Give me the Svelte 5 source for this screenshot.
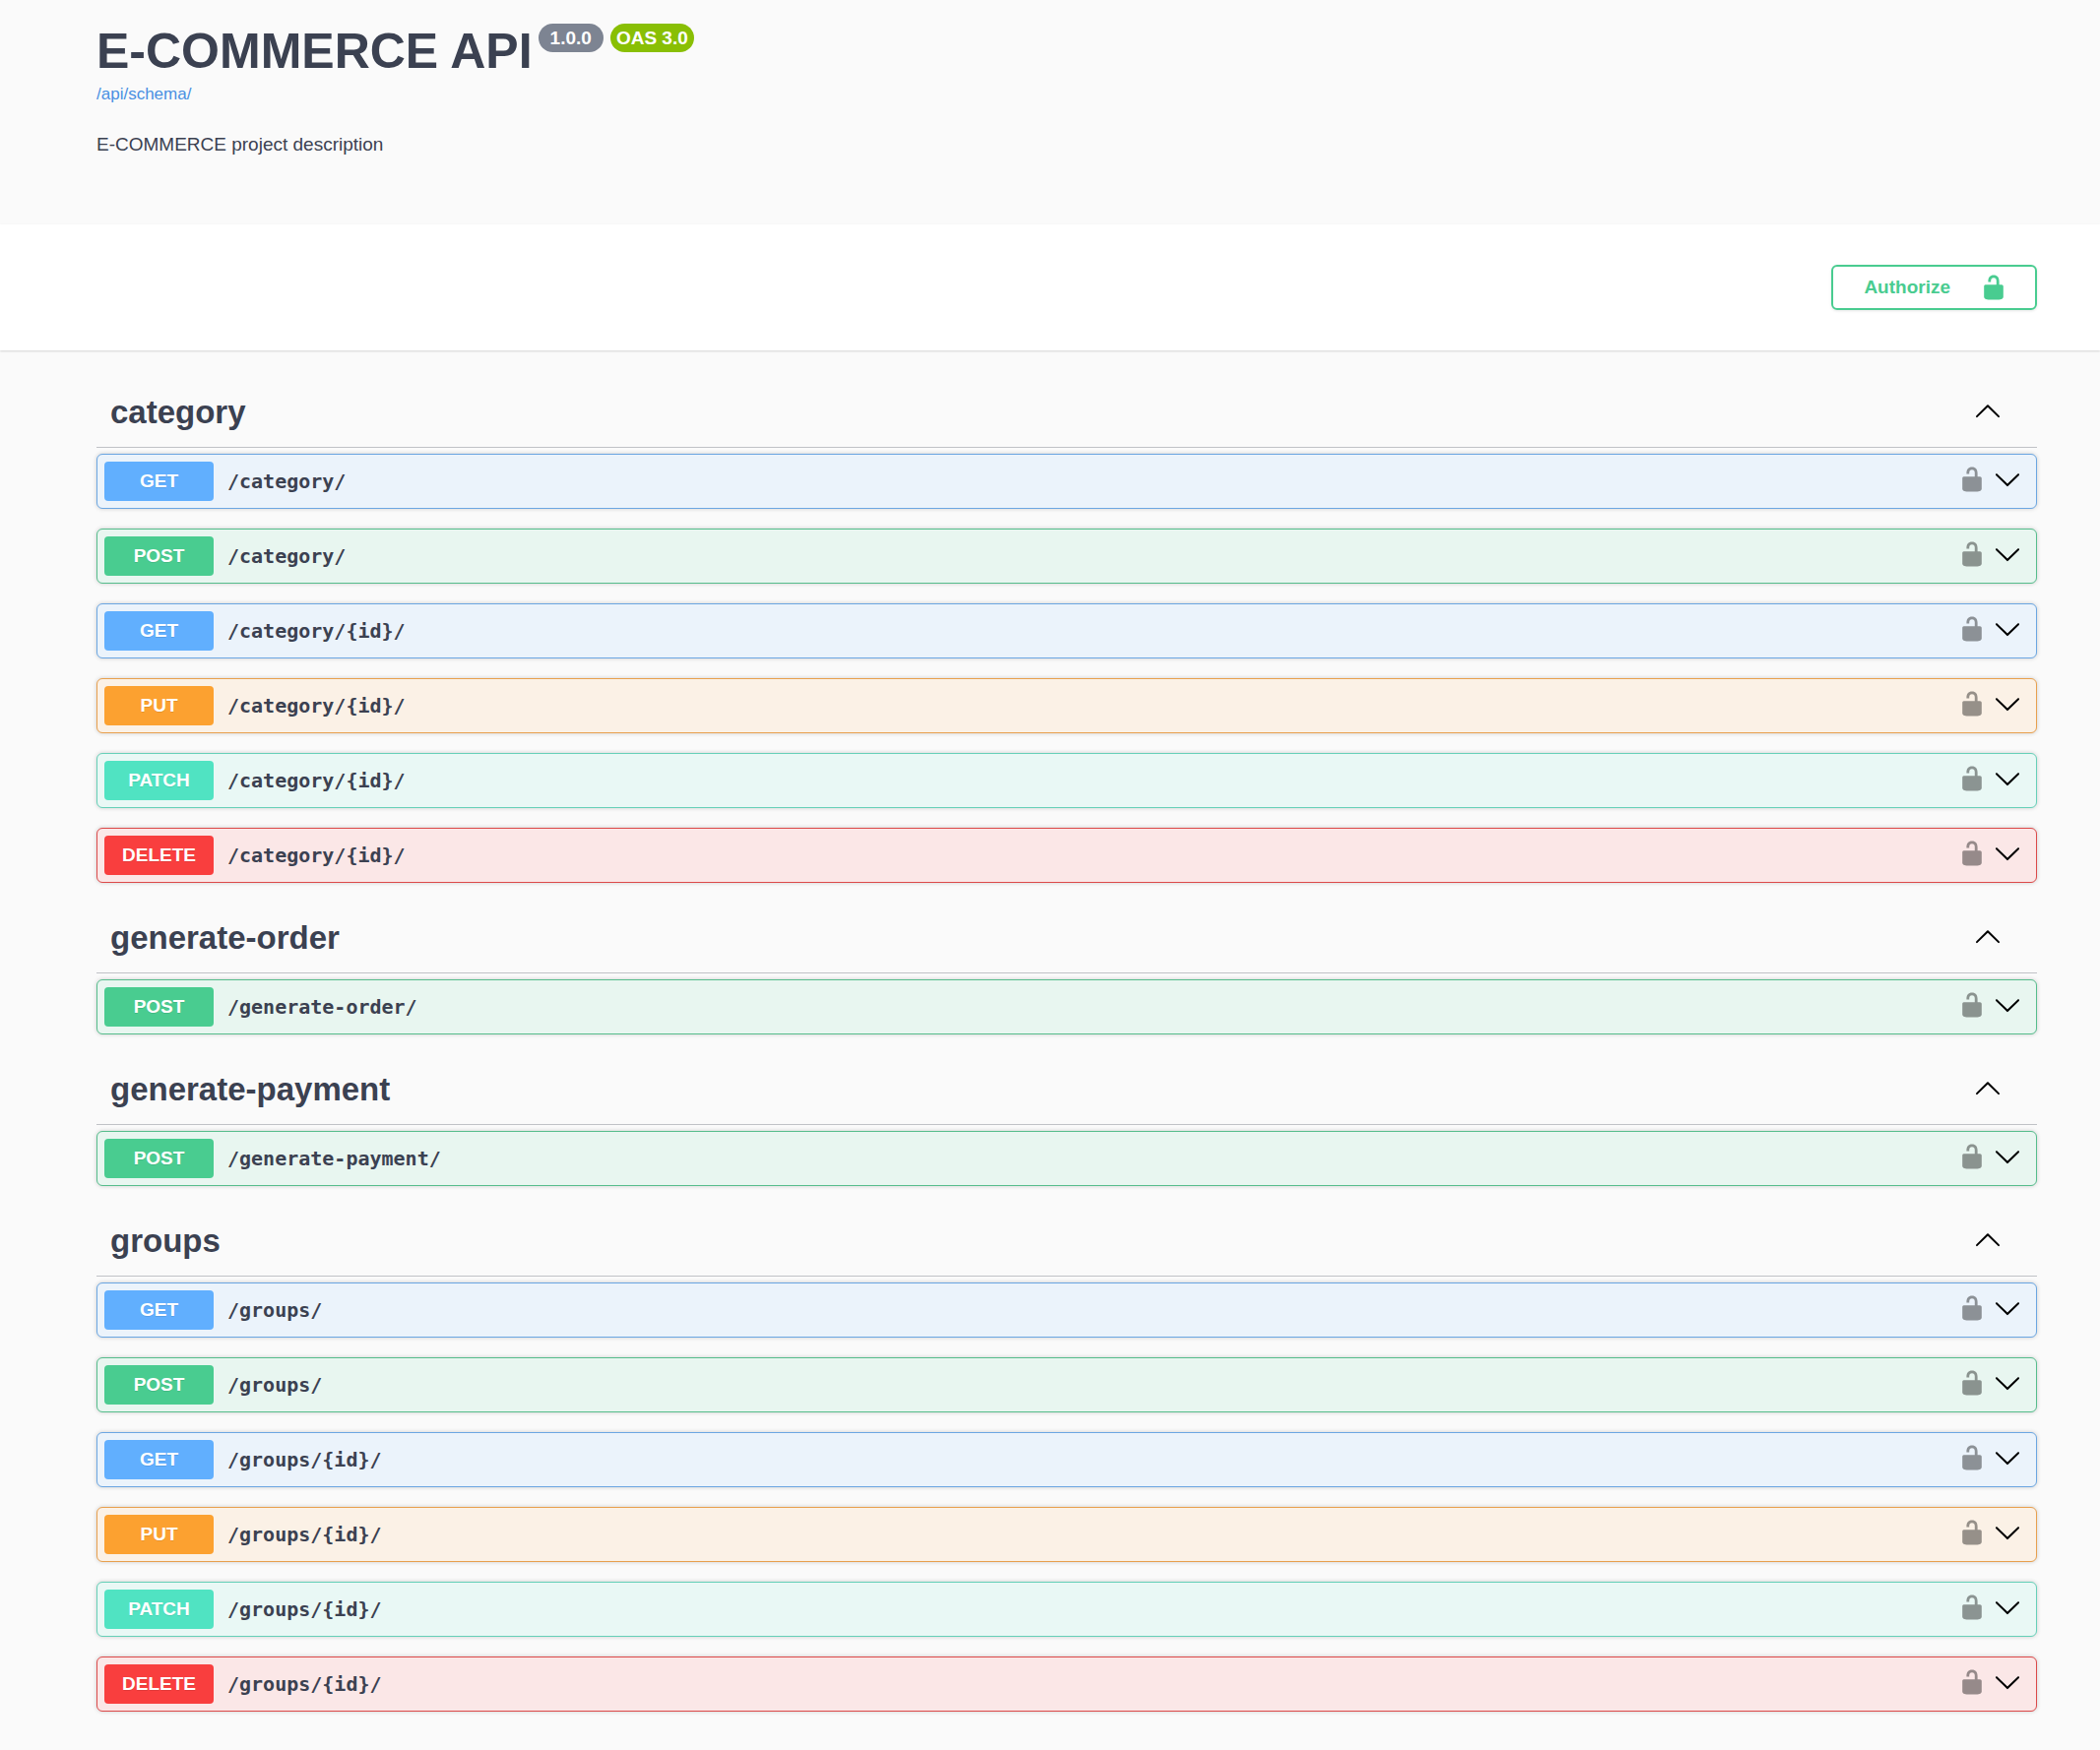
<script>
  const UP =
    'M17.418 14.908c.272.268.709.268.979 0s.271-.701 0-.969l-7.908-7.83c-.27-.268-.707-.268-.979 0l-7.908 7.83c-.27.268-.27.701 0 .969.271.268.709.268.979 0L10 7.767l7.418 7.141z';
  const DOWN =
    'M17.418 6.109c.272-.268.709-.268.979 0s.271.701 0 .969l-7.908 7.83c-.27.268-.707.268-.979 0l-7.908-7.83c-.27-.268-.27-.701 0-.969.271-.268.709-.268.979 0L10 13.25l7.418-7.141z';
  const UNLOCKED =
    'M15.8 8H14V5.6C14 2.703 12.665 1 10 1 7.334 1 6 2.703 6 5.6V6h2v-.801C8 3.754 8.797 3 10 3c1.203 0 2 .754 2 2.199V8H4c-.553 0-1 .646-1 1.199V17c0 .549.428 1.139.951 1.307l1.197.387C5.672 18.861 6.55 19 7.1 19h5.8c.549 0 1.428-.139 1.951-.307l1.196-.387c.524-.167.953-.757.953-1.306V9.199C17 8.646 16.352 8 15.8 8z';

  const crud = (name) => [
    { method: 'get', path: `/${name}/` },
    { method: 'post', path: `/${name}/` },
    { method: 'get', path: `/${name}/{id}/` },
    { method: 'put', path: `/${name}/{id}/` },
    { method: 'patch', path: `/${name}/{id}/` },
    { method: 'delete', path: `/${name}/{id}/` },
  ];

  let sections = $state([
    { name: 'category', open: true, operations: crud('category') },
    { name: 'generate-order', open: true, operations: [{ method: 'post', path: '/generate-order/' }] },
    { name: 'generate-payment', open: true, operations: [{ method: 'post', path: '/generate-payment/' }] },
    { name: 'groups', open: true, operations: crud('groups') },
  ]);
</script>

{#snippet icon(d)}
  <svg class="icon" viewBox="0 0 20 20" aria-hidden="true"><path {d} /></svg>
{/snippet}

<div class="api">
  <header class="info">
    <div class="title">
      <h1>E-COMMERCE API</h1>
      <div class="badges">
        <span class="badge version">1.0.0</span>
        <span class="badge oas">OAS 3.0</span>
      </div>
    </div>
    <a class="schema" href="/api/schema/">/api/schema/</a>
    <p>E-COMMERCE project description</p>
  </header>

  <div class="schemes">
    <button class="authorize" type="button">
      <span>Authorize</span>
      {@render icon(UNLOCKED)}
    </button>
  </div>

  <main>
    {#each sections as section}
      <section>
        <div class="section-head">
          <h2>{section.name}</h2>
          <button
            class="icon-button"
            type="button"
            aria-label="Toggle {section.name}"
            aria-expanded={section.open}
            onclick={() => (section.open = !section.open)}
          >
            {@render icon(section.open ? UP : DOWN)}
          </button>
        </div>
        {#if section.open}
          <div class="operations">
            {#each section.operations as op}
              <div class="operation {op.method}">
                <button class="summary" type="button">
                  <span class="method">{op.method.toUpperCase()}</span>
                  <span class="path">{op.path}</span>
                </button>
                <div class="actions">
                  <button class="icon-button lock" type="button" aria-label="Authorize {op.method} {op.path}">
                    {@render icon(UNLOCKED)}
                  </button>
                  <button class="icon-button" type="button" aria-label="Expand {op.method} {op.path}">
                    {@render icon(DOWN)}
                  </button>
                </div>
              </div>
            {/each}
          </div>
        {/if}
      </section>
    {/each}
  </main>
</div>

<style>
  :global(body) {
    background: #fafafa;
  }
  .api {
    color: #3b4151;
    font-family: 'Liberation Sans', Arial, sans-serif;
    font-size: 19px;
    line-height: 22px;
  }
  h1,
  h2,
  p {
    margin: 0;
  }
  button {
    margin: 0;
    padding: 0;
    border: 0;
    background: none;
    color: inherit;
    font: inherit;
    cursor: pointer;
  }
  .icon {
    display: block;
    width: 28px;
    height: 28px;
    fill: currentColor;
  }

  .info {
    display: flex;
    flex-direction: column;
    align-items: flex-start;
    padding: 24px 64px 70px 98px;
  }
  .title {
    display: flex;
    align-items: flex-start;
    gap: 6px;
  }
  h1 {
    font-size: 50px;
    line-height: 57px;
  }
  .badges {
    display: flex;
    gap: 7px;
  }
  .badge {
    border-radius: 15px;
    color: #fff;
    font-weight: 700;
    line-height: 29px;
  }
  .version {
    padding: 0 12px;
    background: #7d8492;
  }
  .oas {
    padding: 0 6px;
    background: #89bf04;
  }
  .schema {
    margin: 5px 0 30px;
    color: #4990e2;
    font-size: 17px;
    line-height: 20px;
    text-decoration: none;
  }

  .schemes {
    display: flex;
    justify-content: flex-end;
    padding: 41px 64px;
    background: #fff;
    box-shadow: 0 1px 2px rgba(0, 0, 0, 0.15);
  }
  .authorize {
    display: flex;
    align-items: center;
    gap: 30px;
    padding: 7px 28px 7px 31px;
    border: 2px solid #49cc90;
    border-radius: 6px;
    box-shadow: 0 1px 3px rgba(0, 0, 0, 0.1);
    color: #49cc90;
    font-weight: 700;
  }

  main {
    padding: 7px 64px 38px 98px;
  }
  .section-head {
    display: flex;
    align-items: center;
    justify-content: space-between;
    height: 91px;
    margin-bottom: 6px;
    padding: 0 36px 0 14px;
    border-bottom: 1px solid rgba(59, 65, 81, 0.3);
  }
  .section-head h2 {
    padding-top: 20px;
    font-size: 33px;
    line-height: 38px;
  }
  .section-head .icon-button {
    padding-top: 16px;
    color: #000;
  }
  .operations {
    display: flex;
    flex-direction: column;
    gap: 20px;
  }
  .operation {
    display: flex;
    align-items: center;
    box-sizing: border-box;
    height: 56px;
    padding: 0 15px 0 7px;
    border: 1px solid var(--edge);
    border-radius: 6px;
    background: var(--tint);
    box-shadow: 0 0 4px rgba(0, 0, 0, 0.19);
  }
  .get {
    --tone: #61affe;
    --edge: #6ba6e2;
    --tint: #ebf3fb;
  }
  .post {
    --tone: #49cc90;
    --edge: #56bd8c;
    --tint: #e8f6f0;
  }
  .put {
    --tone: #fca130;
    --edge: #e8a04e;
    --tint: #fbf1e6;
  }
  .patch {
    --tone: #50e3c2;
    --edge: #66d0b8;
    --tint: #e9f8f5;
  }
  .delete {
    --tone: #f93e3e;
    --edge: #dc4a4a;
    --tint: #fbe7e7;
  }
  .summary {
    display: flex;
    flex: 1;
    align-items: center;
    gap: 14px;
    text-align: left;
  }
  .method {
    width: 111px;
    border-radius: 4px;
    background: var(--tone);
    color: #fff;
    font-weight: 700;
    line-height: 40px;
    text-align: center;
    text-shadow: 0 1px 0 rgba(0, 0, 0, 0.1);
  }
  .path {
    font-family: 'DejaVu Sans Mono', monospace;
    font-size: 20px;
    font-weight: 700;
  }
  .actions {
    display: flex;
    gap: 8px;
    padding-bottom: 5px;
    color: #000;
  }
  .lock {
    opacity: 0.4;
  }
</style>
